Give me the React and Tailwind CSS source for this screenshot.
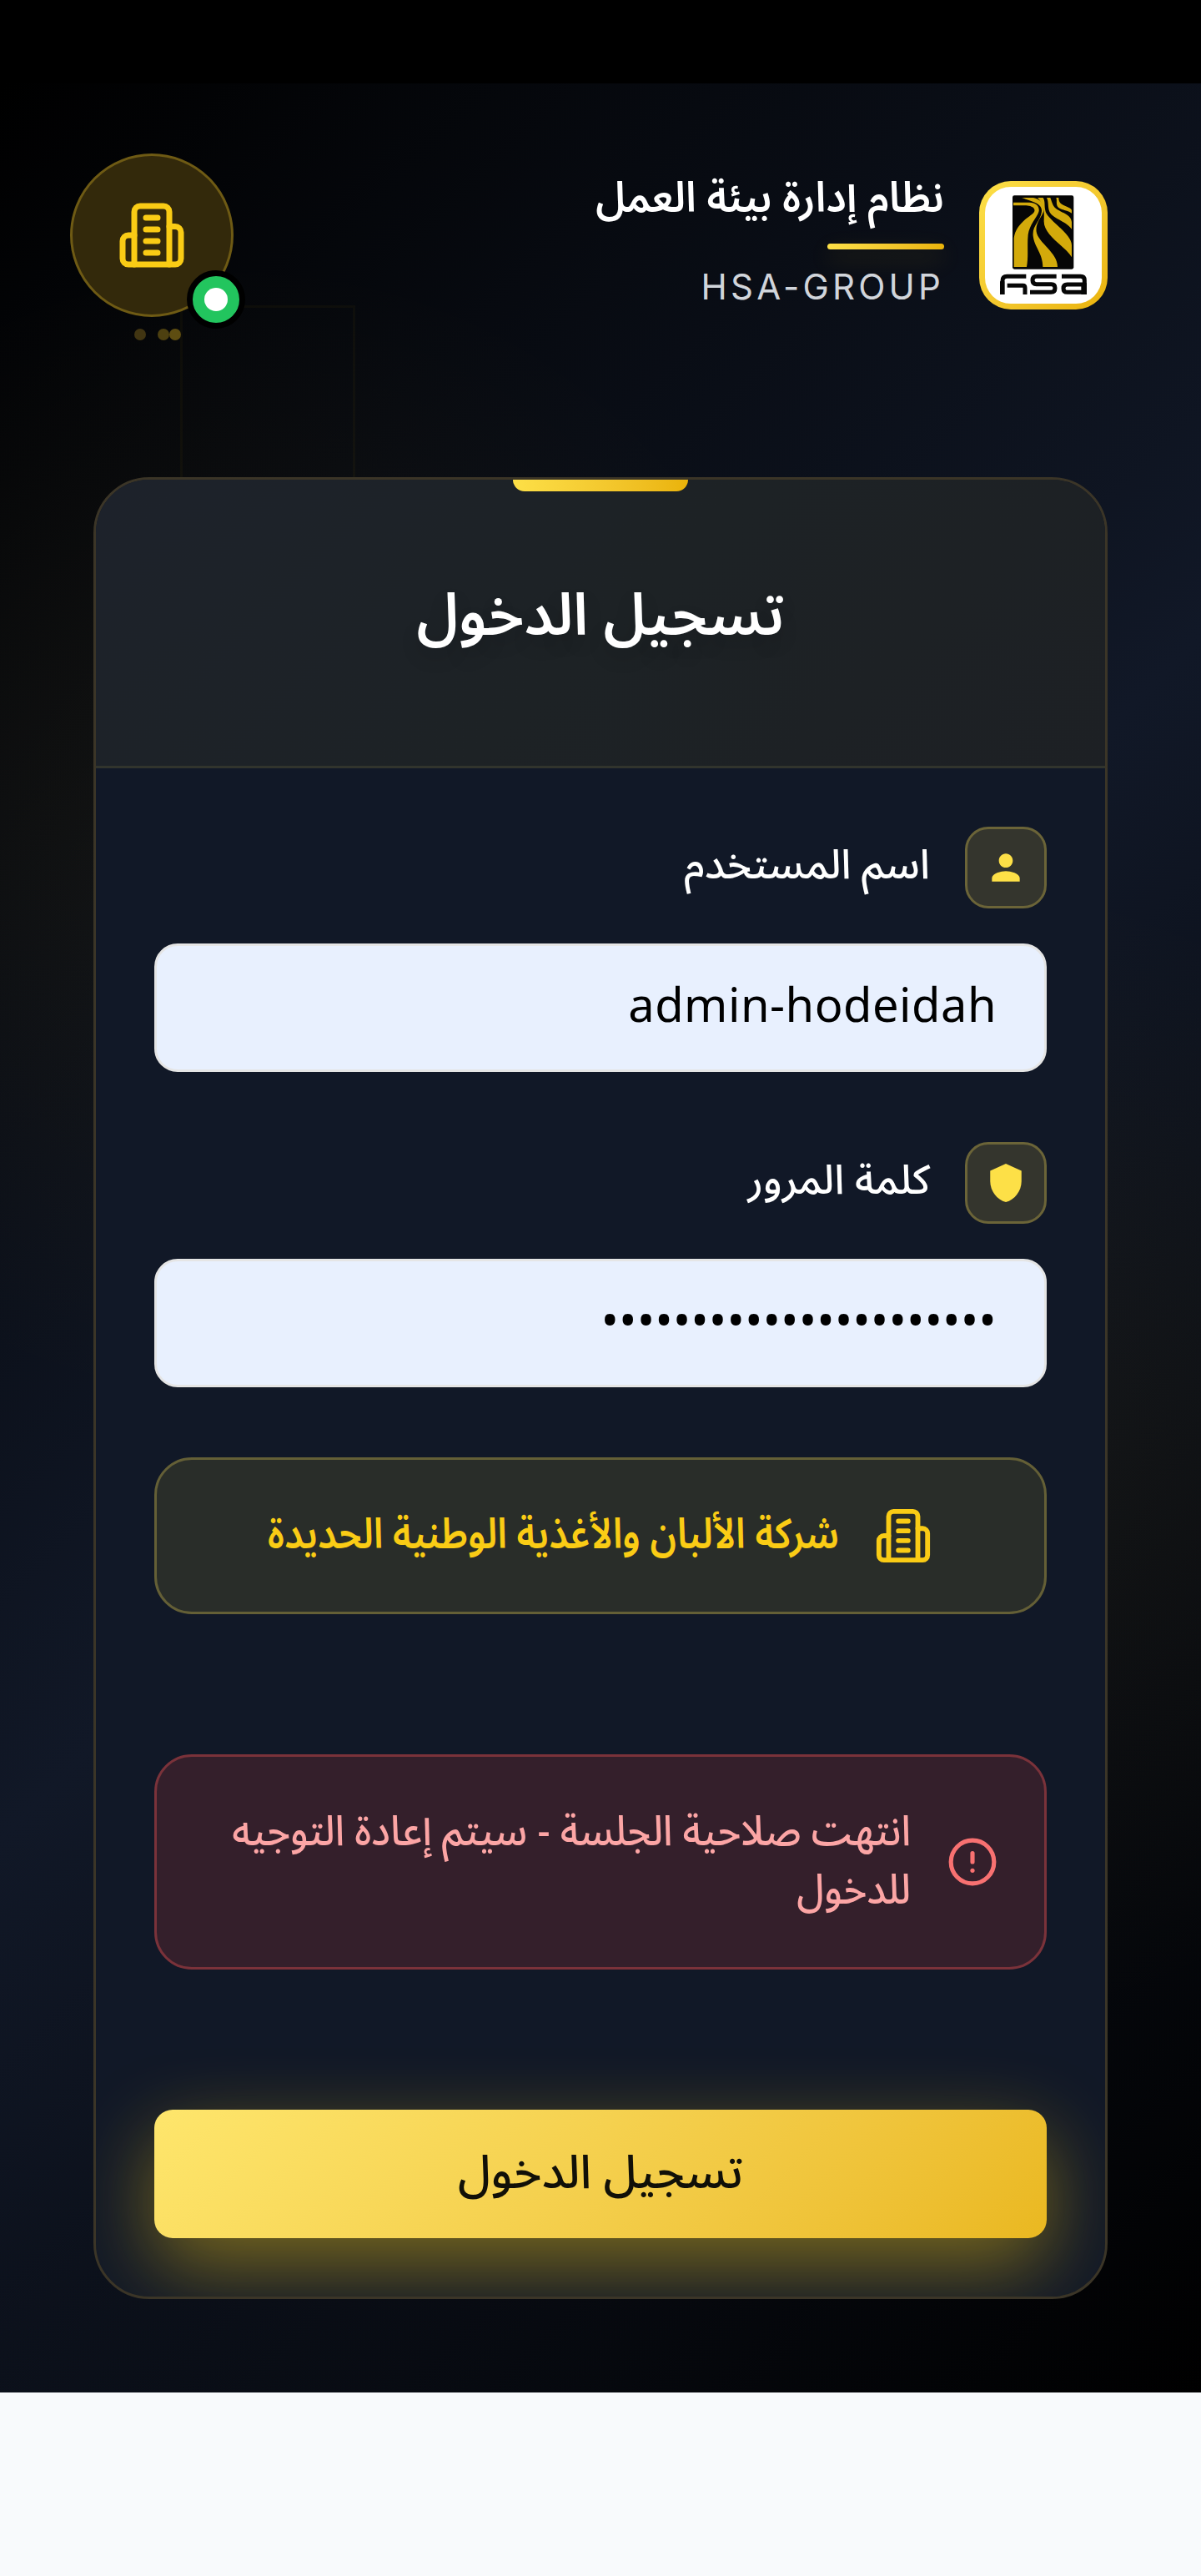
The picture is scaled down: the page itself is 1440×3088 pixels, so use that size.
import { CircleAlert } from "lucide-react";
import { MdPerson, MdShield } from "react-icons/md";

function Building({ className, strokeWidth = 2 }) {
  return (
    <svg className={className} viewBox="0 0 24 24" fill="none" stroke="currentColor" strokeWidth={strokeWidth} strokeLinecap="round" strokeLinejoin="round">
      <path d="M6 22V4a2 2 0 0 1 2-2h8a2 2 0 0 1 2 2v18Z" />
      <path d="M6 12H4a2 2 0 0 0-2 2v6a2 2 0 0 0 2 2h2" />
      <path d="M18 9h2a2 2 0 0 1 2 2v9a2 2 0 0 1-2 2h-2" />
      <path d="M10 6h4M10 10h4M10 14h4M10 18h4" />
    </svg>
  );
}

function Logo() {
  return (
    <div className="flex h-[154px] w-[154px] shrink-0 items-center justify-center rounded-[38px] bg-linear-135 from-[#fde047] to-[#eab308] p-[7px]">
      <svg className="h-[140px] w-[140px] rounded-[31px] bg-white" viewBox="0 0 420 420">
        <rect x="99" y="31" width="220" height="265" rx="7" fill="#060606" />
        <g fill="#d3aa0b">
          <path d="M102 56h58c22 1 36 12 34 30c-2 18-34 48-39 86c-4 38 2 78-5 116h-46V184c4-28 18-46 40-66c20-17 37-24 34-36c-3-10-16-14-30-15h-46z" />
          <path d="M132 39h42c22 5 38 18 38 40c0 24-32 46-27 82c6 40 77 75 76 127h-53c0-50-30-70-35-112c-4-38 29-54 31-90c1-26-32-33-72-47z" />
          <path d="M189 39h20c9 15 3 28 9 50c10 32 95 80 94 122v42c-25-42-103-78-100-132c1-30 2-58-23-82z" />
          <path d="M222 39h13c8 22 8 30 24 42c30 16 50 22 53 45v26c-25-33-68-36-80-63c-7-18-2-35-10-50z" />
          <path d="M256 39h9c0 20 10 24 26 31c12 5 19 8 21 14v11c-18-13-46-12-52-26c-5-11 0-20-4-30z" />
        </g>
        <g fill="none" stroke="#060606" strokeWidth="15" strokeLinejoin="round">
          <path d="M63 387V338q0-16 16-16h69M80 355h56q8 0 8 8v24" />
          <path d="M257 322h-72q-14 0-14 14q0 14 14 14h54q13 0 13 14q0 15-14 15h-76" />
          <path d="M276 322h68q14 0 14 14v51M358 351h-62q-14 0-14 14t14 14h62" />
        </g>
        <path d="M346 346h20v41h-20zM54 340h16v47h-16z" fill="#060606" />
      </svg>
    </div>
  );
}

function FieldLabel({ icon, children }) {
  return (
    <div className="flex h-[98px] items-center gap-[42px]">
      <div className="flex h-[98px] w-[98px] shrink-0 items-center justify-center rounded-[28px] border-[3px] border-[#6b6438] bg-[#34352d] text-[#fde047]">
        {icon}
      </div>
      <span className="-mt-[5px] text-[49px] font-medium leading-none text-white">{children}</span>
    </div>
  );
}

function Field({ children }) {
  return (
    <div className="mt-[42px] flex h-[154px] items-center rounded-[28px] border-[3px] border-[#e5e5e5] bg-[#e8f0fe] px-[57px] pb-[2px] text-[56px] tracking-[0.5px] text-black">
      {children}
    </div>
  );
}

export default function App() {
  return (
    <div dir="rtl" className="h-[3088px] w-[1440px] overflow-hidden bg-[#f8fafc] font-['Noto_Sans_Arabic','Noto_Sans',sans-serif]">
      <div className="h-[100px] bg-black" />
      <div className="relative h-[2768px] bg-[radial-gradient(circle_at_288px_900px,rgba(234,179,8,0.05),transparent_700px),radial-gradient(circle_at_1152px_1640px,rgba(234,179,8,0.05),transparent_700px),linear-gradient(135deg,#000_0%,#111827_50%,#000_100%)]">
        <div className="absolute left-[216px] top-[266px] h-[400px] w-[210px] border-[3px] border-[#eab308]/[0.04]" />
        <header className="relative flex h-[472px] items-start justify-between pl-[84px] pr-[112px]">
          <div className="flex items-start gap-[42px] pt-[117px]">
            <Logo />
            <div className="flex flex-col">
              <h1 className="-mt-[14px] h-[89px] w-[418px] origin-right scale-x-[0.973] whitespace-nowrap text-[50.4px] font-semibold leading-[70px] text-white">نظام إدارة بيئة العمل</h1>
              <div className="h-[7px] w-[140px] rounded-full bg-linear-90 from-[#fde047] to-[#eab308] shadow-[0_11px_28px_rgba(234,179,8,0.2)]" />
              <p className="mt-[15px] font-['Inter'] text-[42px] leading-[60px] tracking-[4.2px] text-[#d1d5db]">HSA-GROUP</p>
            </div>
          </div>
          <div className="relative mt-[84px] flex h-[196px] w-[196px] items-center justify-center rounded-full border-[3px] border-[#6e5a14] bg-[#33290b] text-[#facc15]">
            <Building className="h-[84px] w-[84px]" />
            <span className="absolute left-[137px] top-[137px] flex h-[70px] w-[70px] items-center justify-center rounded-full border-[7px] border-black bg-[#22c55e]">
              <i className="h-[28px] w-[28px] rounded-full bg-white" />
            </span>
            <i className="absolute left-[74px] top-[207px] h-[14px] w-[14px] rounded-full bg-[#413512]" />
            <i className="absolute left-[102px] top-[207px] h-[14px] w-[14px] rounded-full bg-[#4d4010]" />
            <i className="absolute left-[116px] top-[207px] h-[14px] w-[14px] rounded-full bg-[#5e4d11]" />
          </div>
        </header>

        <main className="relative mx-[112px] h-[2184px] overflow-hidden rounded-[67px] border-[3px] border-[#3b3527] bg-[#111827]">
          <div className="flex h-[346px] flex-col items-center border-b-[3px] border-[#31342d] bg-linear-135 from-[#1d222b] via-[#1d2225] to-[#1d2024]">
            <div className="h-[14px] w-[210px] rounded-b-[14px] bg-linear-90 from-[#fde047] to-[#eab308]" />
            <h2 className="mt-[90px] text-[70px] font-semibold leading-[120px] text-white [text-shadow:0_11px_22px_rgba(0,0,0,0.15)]">تسجيل الدخول</h2>
          </div>

          <form className="px-[70px] pt-[70px]">
            <FieldLabel icon={<MdPerson className="h-[50px] w-[50px]" />}>اسم المستخدم</FieldLabel>
            <Field><bdi>admin-hodeidah</bdi></Field>
            <div className="mt-[84px]">
              <FieldLabel icon={<MdShield className="h-[50px] w-[50px]" />}>كلمة المرور</FieldLabel>
              <Field><span>••••••••••••••••••••••</span></Field>
            </div>

            <div className="mt-[84px] flex h-[188px] items-center justify-center gap-[42px] rounded-[45px] border-[3px] border-[#645f36] bg-[#292d29] text-[#facc15]">
              <Building className="h-[70px] w-[70px]" />
              <span className="-mt-[2px] w-[683px] origin-right scale-x-[0.889] whitespace-nowrap text-[50.4px] font-semibold leading-none">شركة الألبان والأغذية الوطنية الحديدة</span>
            </div>

            <div className="mt-[168px] flex h-[258px] items-center gap-[43px] rounded-[45px] border-[3px] border-[#7a323a] bg-[#341f2b] pr-[55px] text-[#fca5a5]">
              <CircleAlert className="h-[62px] w-[62px] shrink-0 text-[#f87171]" />
              <p className="-mt-[2px] w-[812px] origin-right scale-x-[0.928] whitespace-nowrap text-[50.4px] font-medium leading-[70px]">
                انتهت صلاحية الجلسة - سيتم إعادة التوجيه<br />للدخول
              </p>
            </div>

            <button type="button" className="mt-[168px] flex h-[154px] w-full items-center justify-center rounded-[22px] bg-linear-135 from-[#fee66c] to-[#eab820] pb-[3px] text-[56px] font-medium text-[#111008] shadow-[0_34px_98px_rgba(250,204,21,0.45)]">
              تسجيل الدخول
            </button>
          </form>
        </main>
      </div>
    </div>
  );
}
